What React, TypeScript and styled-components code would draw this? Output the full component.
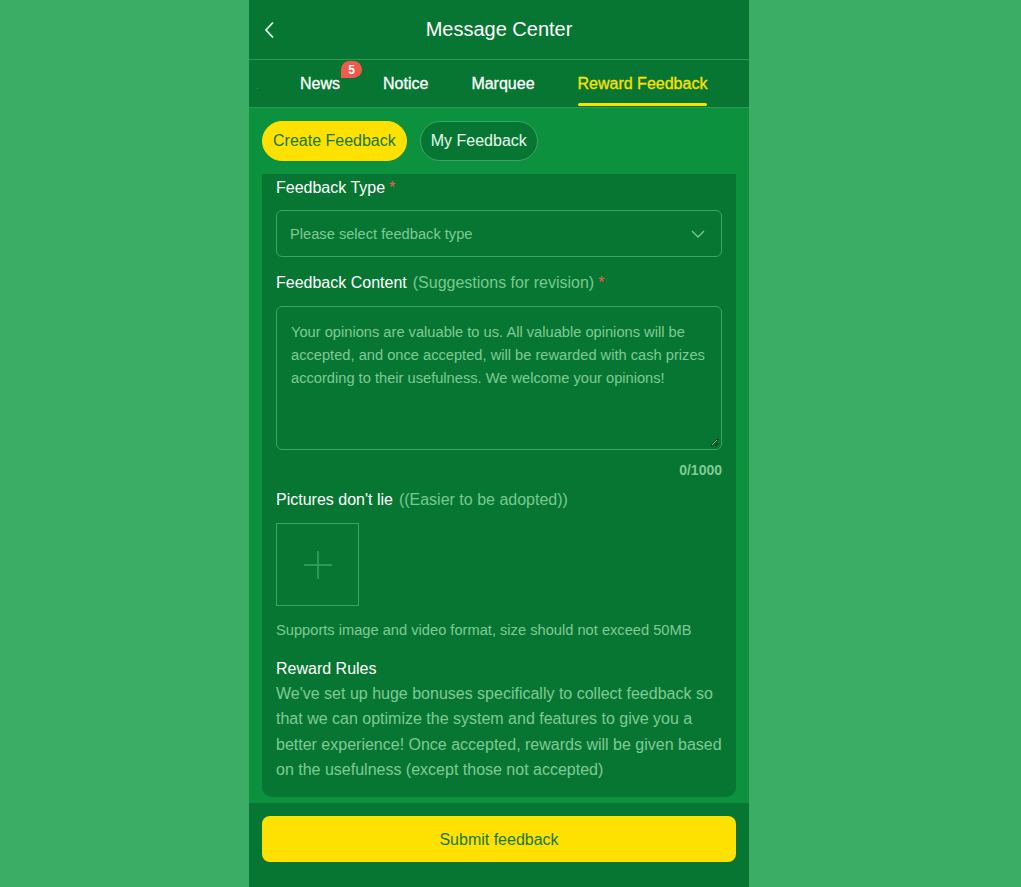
import React from "react";
import styled, { createGlobalStyle } from "styled-components";

const Global = createGlobalStyle`
  html, body { margin: 0; padding: 0; }
  body {
    background: #3bad65;
    font-family: "Liberation Sans", Arial, sans-serif;
  }
  * { box-sizing: border-box; }
`;

const Page = styled.div`
  display: flex;
  justify-content: center;
  min-height: 887px;
  padding-right: 23px;
`;

const Phone = styled.div`
  width: 500px;
  height: 887px;
  display: flex;
  flex-direction: column;
  background: #0c913e;
`;

const Header = styled.header`
  height: 60px;
  background: #077633;
  border-bottom: 1px solid #2e9a57;
  display: grid;
  grid-template-columns: 40px 1fr 40px;
  align-items: center;
  color: #ffffff;
`;

const BackBtn = styled.div`
  display: flex;
  align-items: center;
  justify-content: center;
  padding-left: 2px;
`;

const Title = styled.h1`
  margin: 0;
  text-align: center;
  font-size: 20px;
  font-weight: 400;
`;

const Tabs = styled.nav`
  height: 48px;
  background: #077633;
  border-bottom: 1px solid #2e9a57;
  display: flex;
  align-items: stretch;
  gap: 43px;
  padding-left: 51px;
  position: relative;
`;

const Dot = styled.span`
  position: absolute;
  left: 8px;
  top: 28px;
  width: 1px;
  height: 1px;
  background: #2e9a57;
`;

const Tab = styled.div<{ $active?: boolean }>`
  position: relative;
  display: flex;
  align-items: center;
  font-size: 16px;
  font-weight: 400;
  -webkit-text-stroke: 0.3px ${(p) => (p.$active ? "#ffe100" : "#ffffff")};
  color: ${(p) => (p.$active ? "#ffe100" : "#ffffff")};
  &::after {
    content: "";
    display: ${(p) => (p.$active ? "block" : "none")};
    position: absolute;
    left: 0;
    right: 0;
    bottom: 1px;
    height: 3px;
    border-radius: 2px;
    background: #ffe100;
  }
`;

const Badge = styled.span`
  position: absolute;
  left: 41px;
  top: 1px;
  min-width: 21px;
  height: 17px;
  padding: 0 5px;
  border-radius: 9px 9px 9px 0;
  background: #f15b4e;
  color: #ffffff;
  -webkit-text-stroke: 0;
  font-size: 12px;
  font-weight: 700;
  display: flex;
  align-items: center;
  justify-content: center;
`;

const Body = styled.main`
  flex: 1;
  min-height: 0;
  display: flex;
  flex-direction: column;
  padding: 13px 13px 6px;
  gap: 13px;
`;

const Switcher = styled.div`
  display: flex;
  gap: 13px;
`;

const Pill = styled.button<{ $active?: boolean }>`
  height: 40px;
  padding: 0 10px;
  border-radius: 20px;
  font-family: inherit;
  font-size: 16px;
  cursor: pointer;
  background: ${(p) => (p.$active ? "#ffe100" : "#077633")};
  color: ${(p) => (p.$active ? "#17772c" : "#e6fbee")};
  border: 1px solid ${(p) => (p.$active ? "#ffe100" : "#3aa663")};
`;

const Card = styled.section`
  flex: 1;
  background: #077633;
  border-radius: 0 0 10px 10px;
  padding: 5px 14px 14px;
  display: flex;
  flex-direction: column;
`;

const Label = styled.div<{ $mt?: number }>`
  font-size: 16px;
  color: #ffffff;
  line-height: 18px;
  margin-top: ${(p) => p.$mt ?? 0}px;
  display: flex;
  gap: 6px;
`;

const Hint = styled.span`
  color: #79c98f;
`;

const Star = styled.span`
  color: #f15b4e;
  margin-left: -2px;
`;

const Select = styled.div`
  margin-top: 13px;
  height: 47px;
  border: 1px solid #3aa663;
  border-radius: 6px;
  display: flex;
  align-items: center;
  justify-content: space-between;
  padding: 0 16px 0 13px;
  font-size: 14.67px;
  color: #7fcb94;
`;

const TextArea = styled.div`
  margin-top: 14px;
  height: 144px;
  border: 1px solid #3aa663;
  border-radius: 6px;
  padding: 14px 14px;
  font-size: 14.67px;
  line-height: 23px;
  color: #7fcb94;
  position: relative;
`;

const Grip = styled.svg`
  position: absolute;
  right: 2px;
  bottom: 2px;
`;

const Counter = styled.div`
  margin-top: 12px;
  text-align: right;
  font-size: 14px;
  font-weight: 700;
  color: #7fcb94;
`;

const Upload = styled.div`
  margin-top: 14px;
  width: 83px;
  height: 83px;
  border: 1px solid #3aa663;
  display: flex;
  align-items: center;
  justify-content: center;
`;

const Note = styled.div`
  margin-top: 16px;
  font-size: 14.67px;
  color: #7fcb94;
`;

const Rules = styled.p`
  margin: 3px 0 0;
  font-size: 16px;
  line-height: 25.3px;
  color: #7fcb94;
`;

const Footer = styled.footer`
  height: 84px;
  background: #077633;
  padding: 13px 13px;
`;

const Submit = styled.button`
  width: 100%;
  height: 46px;
  border: none;
  border-radius: 8px;
  background: #ffe100;
  color: #17772c;
  font-family: inherit;
  font-size: 16px;
  padding-top: 2px;
  cursor: pointer;
`;

export default function App() {
  return (
    <>
      <Global />
      <Page>
        <Phone>
          <Header>
            <BackBtn>
              <svg width="14" height="18" viewBox="0 0 14 18" fill="none">
                <path d="M10 1.5L3 9l7 7.5" stroke="#dff7e7" strokeWidth="1.8" />
              </svg>
            </BackBtn>
            <Title>Message Center</Title>
            <div />
          </Header>
          <Tabs>
            <Dot />
            <Tab>
              News
              <Badge>5</Badge>
            </Tab>
            <Tab>Notice</Tab>
            <Tab>Marquee</Tab>
            <Tab $active>Reward Feedback</Tab>
          </Tabs>
          <Body>
            <Switcher>
              <Pill $active>Create Feedback</Pill>
              <Pill>My Feedback</Pill>
            </Switcher>
            <Card>
              <Label>
                Feedback Type <Star>*</Star>
              </Label>
              <Select>
                <span>Please select feedback type</span>
                <svg width="14" height="8" viewBox="0 0 14 8" fill="none">
                  <path d="M1 1l6 6 6-6" stroke="#7fcb94" strokeWidth="1.3" />
                </svg>
              </Select>
              <Label $mt={17}>
                Feedback Content <Hint>(Suggestions for revision)</Hint>
                <Star>*</Star>
              </Label>
              <TextArea>
                Your opinions are valuable to us. All valuable opinions will be
                accepted, and once accepted, will be rewarded with cash prizes
                according to their usefulness. We welcome your opinions!
                <Grip width="10" height="10" viewBox="0 0 10 10" fill="none">
                  <path d="M9 2L2 9M9 6L6 9" stroke="#0b2a14" strokeWidth="1.4" />
                  <path d="M8 3L3 8" stroke="#9fdcb0" strokeWidth="0.8" />
                </Grip>
              </TextArea>
              <Counter>0/1000</Counter>
              <Label $mt={13}>
                Pictures don't lie <Hint>((Easier to be adopted))</Hint>
              </Label>
              <Upload>
                <svg width="30" height="30" viewBox="0 0 30 30" fill="none">
                  <path d="M15 1v28M1 15h28" stroke="#3aa663" strokeWidth="1.4" />
                </svg>
              </Upload>
              <Note>Supports image and video format, size should not exceed 50MB</Note>
              <Label $mt={22}>Reward Rules</Label>
              <Rules>
                We've set up huge bonuses specifically to collect feedback so
                that we can optimize the system and features to give you a
                better experience! Once accepted, rewards will be given based
                on the usefulness (except those not accepted)
              </Rules>
            </Card>
          </Body>
          <Footer>
            <Submit>Submit feedback</Submit>
          </Footer>
        </Phone>
      </Page>
    </>
  );
}
